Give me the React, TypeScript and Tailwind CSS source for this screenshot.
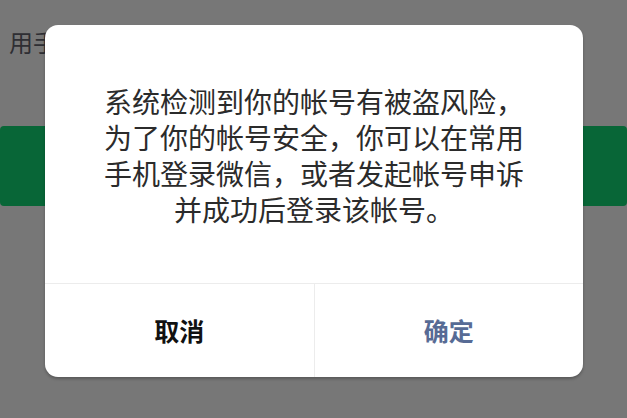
import React from "react";

export default function App() {
  return (
    <div
      className="relative h-[418px] w-[627px] overflow-hidden bg-[#777777]"
      style={{ fontFamily: '"Noto Sans CJK SC", "Noto Sans", sans-serif' }}
    >
      {/* page behind the mask */}
      <div className="flex flex-col pt-[27px]">
        <div className="pl-[9px] text-[24px] leading-[30px] text-[#2e2e33]">
          用手机号登录
        </div>
        <div className="mt-[69px] h-[80px] w-full rounded-[4px] bg-[#086637]" />
      </div>

      {/* dialog */}
      <div className="absolute left-[45px] top-[25px] flex h-[352px] w-[538px] flex-col overflow-hidden rounded-[13px] bg-white shadow-[0_2px_3px_rgba(0,0,0,0.25)]">
        <div className="flex h-[258px] items-center justify-center pt-[2px]">
          <p className="whitespace-nowrap text-center text-[28px] leading-[36px] text-[#2b2b2b]">
            系统检测到你的帐号有被盗风险，
            <br />
            为了你的帐号安全，你可以在常用
            <br />
            手机登录微信，或者发起帐号申诉
            <br />
            并成功后登录该帐号。
          </p>
        </div>
        <div className="flex flex-1 border-t border-[#ececec]">
          <button className="flex flex-1 items-center justify-center text-[25px] font-bold text-[#111111]">
            取消
          </button>
          <div className="w-px bg-[#ececec]" />
          <button className="flex flex-1 items-center justify-center text-[25px] font-bold text-[#576b95]">
            确定
          </button>
        </div>
      </div>
    </div>
  );
}
